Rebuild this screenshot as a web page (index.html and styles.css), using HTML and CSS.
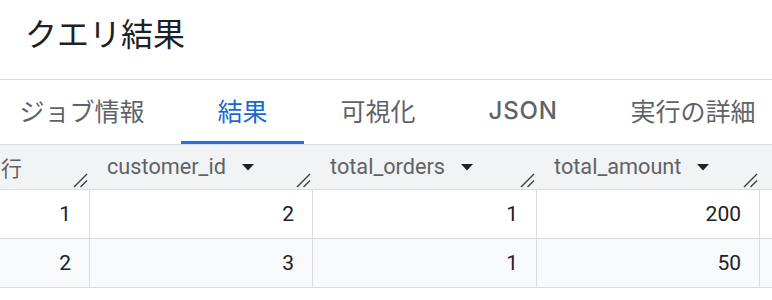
FILE: index.html
```html
<!DOCTYPE html>
<html lang="ja">
<head>
<meta charset="utf-8">
<title>クエリ結果</title>
<link rel="stylesheet" href="styles.css">
</head>
<body>
<div class="page">
  <div class="title">クエリ結果</div>
  <div class="scroller">
    <div class="tabs">
      <div class="tab">ジョブ情報</div>
      <div class="tab active">結果</div>
      <div class="tab">可視化</div>
      <div class="tab latin">JSON</div>
      <div class="tab">実行の詳細</div>
    </div>
    <div class="grid">
      <div class="hcell"><span class="htext cjk">行</span><svg class="grip" width="15" height="15" viewBox="0 0 15 15"><path d="M1 14L14 1M7.5 14L14 7.5"/></svg></div>
      <div class="hcell"><span class="htext">customer_id</span><svg class="sort" width="12" height="7" viewBox="0 0 12 7"><path d="M0 0H12L6 6.5Z"/></svg><svg class="grip" width="15" height="15" viewBox="0 0 15 15"><path d="M1 14L14 1M7.5 14L14 7.5"/></svg></div>
      <div class="hcell"><span class="htext">total_orders</span><svg class="sort" width="12" height="7" viewBox="0 0 12 7"><path d="M0 0H12L6 6.5Z"/></svg><svg class="grip" width="15" height="15" viewBox="0 0 15 15"><path d="M1 14L14 1M7.5 14L14 7.5"/></svg></div>
      <div class="hcell"><span class="htext">total_amount</span><svg class="sort" width="12" height="7" viewBox="0 0 12 7"><path d="M0 0H12L6 6.5Z"/></svg><svg class="grip" width="15" height="15" viewBox="0 0 15 15"><path d="M1 14L14 1M7.5 14L14 7.5"/></svg></div>
      <div class="hcell"></div>

      <div class="cell first">1</div>
      <div class="cell">2</div>
      <div class="cell">1</div>
      <div class="cell">200</div>
      <div class="cell"></div>

      <div class="cell first alt">2</div>
      <div class="cell alt">3</div>
      <div class="cell alt">1</div>
      <div class="cell alt">50</div>
      <div class="cell alt"></div>
    </div>
  </div>
</div>
</body>
</html>
```

FILE: styles.css
```css
html, body {
  margin: 0;
  padding: 0;
  background: #ffffff;
}

body {
  width: 772px;
  height: 300px;
  overflow: hidden;
  font-family: Roboto, "Noto Sans CJK JP", sans-serif;
  color: #202124;
}

.page {
  width: 772px;
  overflow: hidden;
}

.title {
  font-family: "Noto Sans CJK JP", sans-serif;
  font-size: 32px;
  line-height: 40px;
  height: 40px;
  padding: 12px 0 27px 25px;
  color: #202124;
  border-bottom: 1px solid #dadce0;
}

.scroller {
  margin-left: -17px;
  width: 900px;
}

.tabs {
  display: flex;
  height: 64px;
}

.tab {
  flex: none;
  padding: 0 36.5px;
  height: 61px;
  line-height: 61px;
  border-bottom: 3px solid transparent;
  font-family: "Noto Sans CJK JP", sans-serif;
  font-size: 25px;
  color: #5f6368;
  white-space: nowrap;
}

.tab.active {
  color: #1967d2;
  border-bottom-color: #1a73e8;
}

.tab.latin {
  font-family: Inter, Roboto, sans-serif;
  font-weight: 500;
  font-size: 24px;
  letter-spacing: 0.8px;
}

.grid {
  display: grid;
  grid-template-columns: 106px 223px 224px 223px 101px;
  border-top: 1px solid #dadce0;
}

.hcell {
  display: flex;
  align-items: center;
  height: 44px;
  padding: 0 1px 0 18px;
  background: #f1f3f4;
  border-bottom: 1px solid #dadce0;
  font-size: 21.7px;
  color: #5f6368;
  white-space: nowrap;
}

.htext {
  line-height: 44px;
}

.htext.cjk {
  font-family: "Noto Sans CJK JP", sans-serif;
  font-size: 21px;
}

.sort {
  flex: none;
  margin-left: 16px;
  fill: #202124;
}

.grip {
  flex: none;
  margin-left: auto;
  align-self: flex-end;
  margin-bottom: 1px;
  fill: none;
  stroke: #3c4043;
  stroke-width: 1.4;
}

.cell {
  height: 48px;
  line-height: 48px;
  padding-right: 18px;
  text-align: right;
  font-size: 21px;
  color: #202124;
  border-left: 1px solid #dadce0;
  border-bottom: 1px solid #dadce0;
  background: #ffffff;
}

.cell.first {
  border-left: none;
}

.cell.alt {
  background: #f8f9fa;
}
```
